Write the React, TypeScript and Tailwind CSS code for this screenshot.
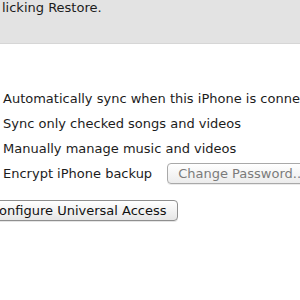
import React from "react";

export default function App() {
  const font = { fontFamily: '"DejaVu Sans", "Lucida Grande", sans-serif' };
  return (
    <div className="w-[300px] h-[300px] overflow-hidden bg-white relative" style={font}>
      <div className="h-[44px] bg-[#e3e3e3] border-b border-[#d6d6d6] pl-[2px] pt-[1px]">
        <div className="text-[13px] leading-[14px] text-[#1c1c1c] whitespace-nowrap">licking Restore.</div>
      </div>
      <div className="pl-[3px] pt-[48px] flex flex-col text-[13px] text-[#1c1c1c] whitespace-nowrap">
        <div className="h-[25px] leading-[14px]">Automatically sync when this iPhone is connected</div>
        <div className="h-[25px] leading-[14px]">Sync only checked songs and videos</div>
        <div className="h-[25px] leading-[14px]">Manually manage music and videos</div>
        <div className="h-[25px] flex items-start">
          <span className="leading-[14px]">Encrypt iPhone backup</span>
          <div className="ml-[15px] -mt-[4px] h-[21px] w-[150px] shrink-0 rounded-[4px] border border-[#a9a9a9] bg-gradient-to-b from-[#ffffff] to-[#ececec] text-[#7b7b7b] pl-[10px] leading-[19px] shadow-[0_1px_0_rgba(0,0,0,0.08)]">
            Change Password...
          </div>
        </div>
      </div>
      <div className="mt-[8px] -ml-[16px] h-[21px] w-[194px] rounded-[4px] border border-[#8f8f8f] bg-gradient-to-b from-[#ffffff] to-[#e6e6e6] text-[13px] text-[#111] pl-[5px] leading-[19px] whitespace-nowrap shadow-[0_1px_0_rgba(0,0,0,0.1)]">
        Configure Universal Access
      </div>
    </div>
  );
}
